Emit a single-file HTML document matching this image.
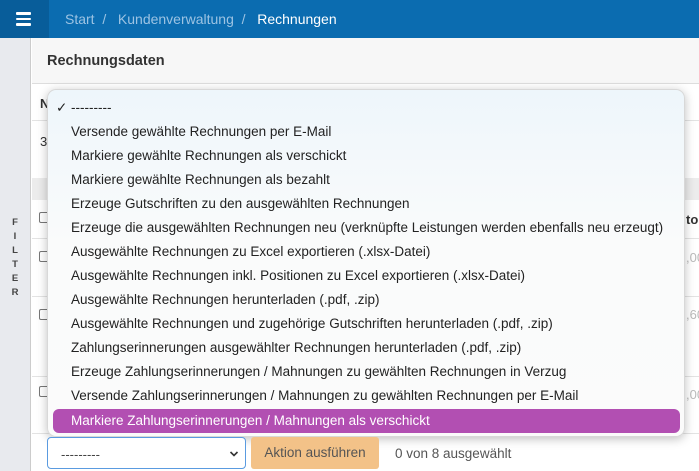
<!DOCTYPE html>
<html><head><style>
*{box-sizing:border-box;margin:0;padding:0}
body{width:699px;height:471px;overflow:hidden;font-family:"Liberation Sans",sans-serif;background:#fff;position:relative;font-size:13px;color:#222}
.top{position:absolute;left:0;top:0;width:699px;height:38px;background:#0b6cb0}
.hb{position:absolute;left:0;top:0;width:49px;height:38px;background:#085d9a}
.hb i{position:absolute;left:16px;width:15px;height:2.5px;background:#fff;border-radius:1px}
.crumb{position:absolute;left:65px;top:11px;font-size:14px;color:#9cc3e3}
.crumb b{font-weight:normal;color:#fff}
.side{position:absolute;left:0;top:38px;width:31px;height:433px;background:#e8eaee;border-right:1px solid #ccc}
.filter{position:absolute;left:9px;top:216px;font-size:9.5px;font-weight:bold;color:#444;line-height:14px;width:12px;text-align:center}
.ch{position:absolute;left:32px;top:38px;width:667px;height:46px;background:#f7f7f7;border-bottom:1px solid #ddd}
.ch span{position:absolute;left:15px;top:15px;font-size:14.5px;font-weight:bold;color:#333}
.line{position:absolute;left:32px;width:667px;height:1px;background:#e3e3e3}
.band{position:absolute;left:32px;top:178px;width:667px;height:22px;background:#ececec}
.cb{position:absolute;left:39px;width:11px;height:11px;border:1px solid #777;border-radius:2px;background:#fff}
.t{position:absolute;font-size:13px;color:#333}
.dd{position:absolute;left:47px;top:89px;width:638px;height:348px;border-radius:9px;background:linear-gradient(#eef6fb,#fafbfb 45%,#fbfbfb);box-shadow:0 2px 10px rgba(0,0,0,.25);border:1px solid #d8d8d8}
.it{position:absolute;left:23px;font-size:13.5px;color:#222;white-space:nowrap}
.sel{position:absolute;left:5px;top:319px;width:627px;height:24px;background:#b24fb2;border-radius:6px}
.sel span{position:absolute;left:18px;top:4px;color:#fff;font-size:13.5px}
.s{position:absolute;left:47px;top:437px;width:199px;height:32px;border:1px solid #5a9be0;border-radius:4px;background:#fff}
.s span{position:absolute;left:13px;top:9px;color:#444}
.btn{position:absolute;left:251px;top:437px;width:128px;height:32px;background:#f3c288;border-radius:3px;color:#555;font-size:13.5px;text-align:center;line-height:32px}
</style></head><body>
<div class="top"><div class="hb"><i style="top:12px"></i><i style="top:17.5px"></i><i style="top:23px"></i></div>
<div class="crumb">Start &nbsp;/&nbsp;&nbsp; Kundenverwaltung &nbsp;/&nbsp;&nbsp; <b>Rechnungen</b></div></div>
<div class="side"></div>
<div class="filter">F<br>I<br>L<br>T<br>E<br>R</div>
<div class="ch"><span>Rechnungsdaten</span></div>
<div class="line" style="top:120px"></div>
<div class="line" style="top:238px"></div>
<div class="line" style="top:296px"></div>
<div class="line" style="top:376px"></div>
<div class="line" style="top:433px"></div>
<div class="band"></div>
<div class="t" style="left:40px;top:96px;font-weight:bold">N</div>
<div class="t" style="left:40px;top:134px">3</div>
<div class="cb" style="top:212px"></div>
<div class="cb" style="top:251px"></div>
<div class="cb" style="top:309px"></div>
<div class="cb" style="top:386px"></div>
<div class="t" style="left:686px;top:212px;font-weight:bold">to</div>
<div class="t" style="left:686px;top:250px;color:#bbb">,00</div>
<div class="t" style="left:686px;top:307px;color:#bbb">,60</div>
<div class="t" style="left:686px;top:387px;color:#bbb">,00</div>
<div class="dd">
<div class="it" style="left:8px;top:10px">✓ ---------</div>
<div class="it" style="top:34px">Versende gewählte Rechnungen per E-Mail</div>
<div class="it" style="top:58px">Markiere gewählte Rechnungen als verschickt</div>
<div class="it" style="top:82px">Markiere gewählte Rechnungen als bezahlt</div>
<div class="it" style="top:106px">Erzeuge Gutschriften zu den ausgewählten Rechnungen</div>
<div class="it" style="top:130px">Erzeuge die ausgewählten Rechnungen neu (verknüpfte Leistungen werden ebenfalls neu erzeugt)</div>
<div class="it" style="top:154px">Ausgewählte Rechnungen zu Excel exportieren (.xlsx-Datei)</div>
<div class="it" style="top:178px">Ausgewählte Rechnungen inkl. Positionen zu Excel exportieren (.xlsx-Datei)</div>
<div class="it" style="top:202px">Ausgewählte Rechnungen herunterladen (.pdf, .zip)</div>
<div class="it" style="top:226px">Ausgewählte Rechnungen und zugehörige Gutschriften herunterladen (.pdf, .zip)</div>
<div class="it" style="top:250px">Zahlungserinnerungen ausgewählter Rechnungen herunterladen (.pdf, .zip)</div>
<div class="it" style="top:274px">Erzeuge Zahlungserinnerungen / Mahnungen zu gewählten Rechnungen in Verzug</div>
<div class="it" style="top:298px">Versende Zahlungserinnerungen / Mahnungen zu gewählten Rechnungen per E-Mail</div>
<div class="sel"><span>Markiere Zahlungserinnerungen / Mahnungen als verschickt</span></div>
</div>
<div class="s"><span>---------</span><svg style="position:absolute;right:6px;top:12px" width="10" height="8" viewBox="0 0 10 8"><path d="M1.5 2l3.5 3.5L8.5 2" stroke="#333" stroke-width="1.6" fill="none"/></svg></div>
<div class="btn">Aktion ausführen</div>
<div class="t" style="left:395px;top:446px;color:#555;font-size:13.5px">0 von 8 ausgewählt</div>
</body></html>
